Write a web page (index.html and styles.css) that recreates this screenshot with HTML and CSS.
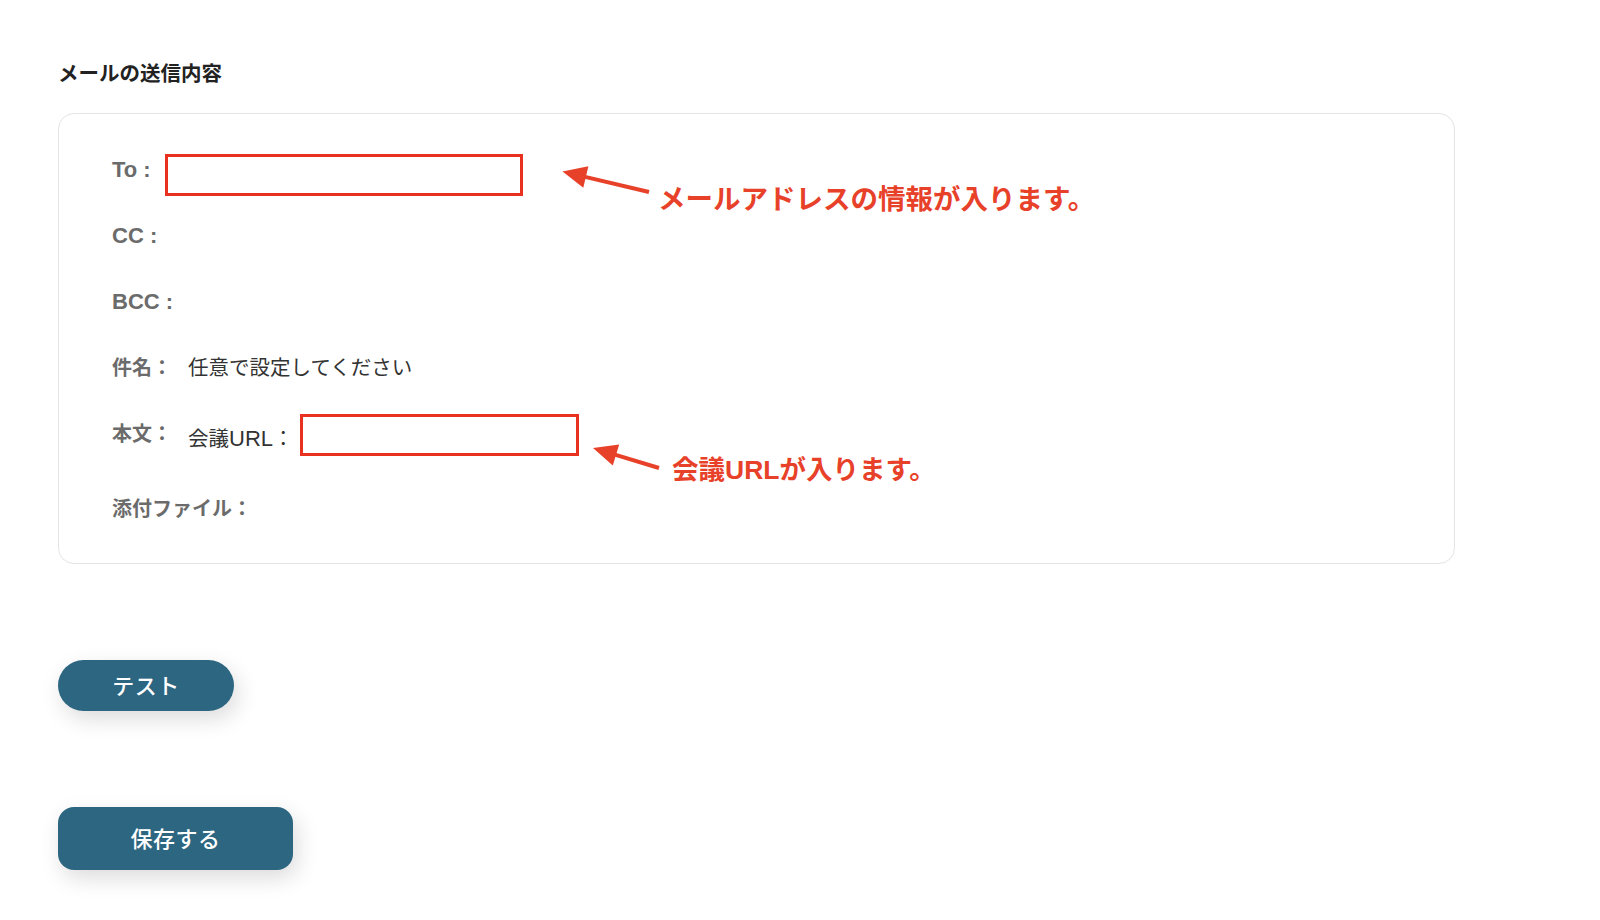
FILE: index.html
```html
<!DOCTYPE html>
<html lang="ja">
<head>
<meta charset="utf-8">
<title>メールの送信内容</title>
<link rel="stylesheet" href="styles.css">
</head>
<body>
<main class="page">
  <h2 class="section-title">メールの送信内容</h2>
  <section class="mail-card">
    <div class="row row-to"><span class="label label-latin">To :</span><span class="field-box field-to"></span></div>
    <div class="row"><span class="label label-latin">CC :</span></div>
    <div class="row"><span class="label label-latin">BCC :</span></div>
    <div class="row"><span class="label">件名：</span><span class="value">任意で設定してください</span></div>
    <div class="row row-body"><span class="label">本文：</span><span class="value value-url">会議<span class="latin">URL</span>：</span><span class="field-box field-url"></span></div>
    <div class="row row-attach"><span class="label">添付ファイル：</span></div>
  </section>
  <div class="actions">
    <button class="btn btn-test" type="button">テスト</button>
    <button class="btn btn-save" type="button">保存する</button>
  </div>

  <svg class="arrows" width="1600" height="920" viewBox="0 0 1600 920" aria-hidden="true">
    <line x1="649" y1="192" x2="584" y2="176.6" class="arrow-line"/>
    <polygon points="562.5,171.5 588.4,166.3 583.3,187.7" class="arrow-head"/>
    <line x1="659" y1="468" x2="614" y2="454.4" class="arrow-line"/>
    <polygon points="593,448 619.2,444.4 612.8,465.5" class="arrow-head"/>
  </svg>
  <p class="annotation ann-mail">メールアドレスの情報が入ります。</p>
  <p class="annotation ann-url">会議URLが入ります。</p>
</main>
</body>
</html>
```
FILE: styles.css
```css
* { box-sizing: border-box; }

html, body {
  margin: 0;
  padding: 0;
  background: #ffffff;
}

body {
  font-family: "Liberation Sans", "Noto Sans CJK JP", sans-serif;
  color: #333333;
}

.page {
  position: relative;
  width: 1600px;
  min-height: 920px;
  padding: 60px 0 0 58px;
}

.section-title {
  margin: 0;
  font-size: 20.5px;
  line-height: 28px;
  font-weight: 700;
  color: #222222;
}

.mail-card {
  margin-top: 25px;
  width: 1397px;
  border: 1px solid #e4e4e4;
  border-radius: 16px;
  padding: 41px 53px 39px 53px;
  display: flex;
  flex-direction: column;
  gap: 36px;
}

.row {
  display: flex;
  align-items: flex-start;
  height: 30px;
}

.label {
  font-size: 20px;
  line-height: 30px;
  font-weight: 700;
  color: #6b6b6b;
  white-space: nowrap;
}

.label-latin {
  font-size: 22px;
}

.value {
  margin-left: 16px;
  font-size: 20.5px;
  line-height: 30px;
  font-weight: 400;
  color: #333333;
  white-space: nowrap;
}

.latin {
  font-size: 22px;
}

.value-url {
  margin-top: 5px;
}

.field-box {
  flex: none;
  height: 42px;
  border: 3px solid #e8321f;
  background: #ffffff;
}

.field-to {
  width: 358px;
  margin-left: 14px;
  margin-top: -1px;
}

.field-url {
  width: 279px;
  margin-left: 6px;
  margin-top: -5px;
}

.row-attach {
  margin-top: 9px;
}

.actions {
  display: flex;
  flex-direction: column;
  align-items: flex-start;
  gap: 96px;
  margin-top: 96px;
}

.btn {
  border: none;
  background: #2d6681;
  color: #ffffff;
  font-family: "Noto Sans CJK JP", sans-serif;
  font-size: 22px;
  font-weight: 500;
  letter-spacing: 0.5px;
  box-shadow: 4px 8px 22px rgba(0, 0, 0, 0.14);
  cursor: pointer;
  padding: 0 0 4px 0;
}

.btn-test {
  width: 176px;
  height: 51px;
  border-radius: 26px;
}

.btn-save {
  width: 235px;
  height: 63px;
  border-radius: 16px;
}

.arrows {
  position: absolute;
  left: 0;
  top: 0;
  pointer-events: none;
}

.arrow-line {
  stroke: #e8412a;
  stroke-width: 4;
}

.arrow-head {
  fill: #e8412a;
}

.annotation {
  position: absolute;
  margin: 0;
  line-height: 36px;
  font-weight: 700;
  color: #e8412a;
  white-space: nowrap;
}

.ann-mail {
  left: 658px;
  top: 182px;
  font-size: 27.5px;
}

.ann-url {
  left: 672px;
  top: 452px;
  font-size: 26.5px;
}
```
